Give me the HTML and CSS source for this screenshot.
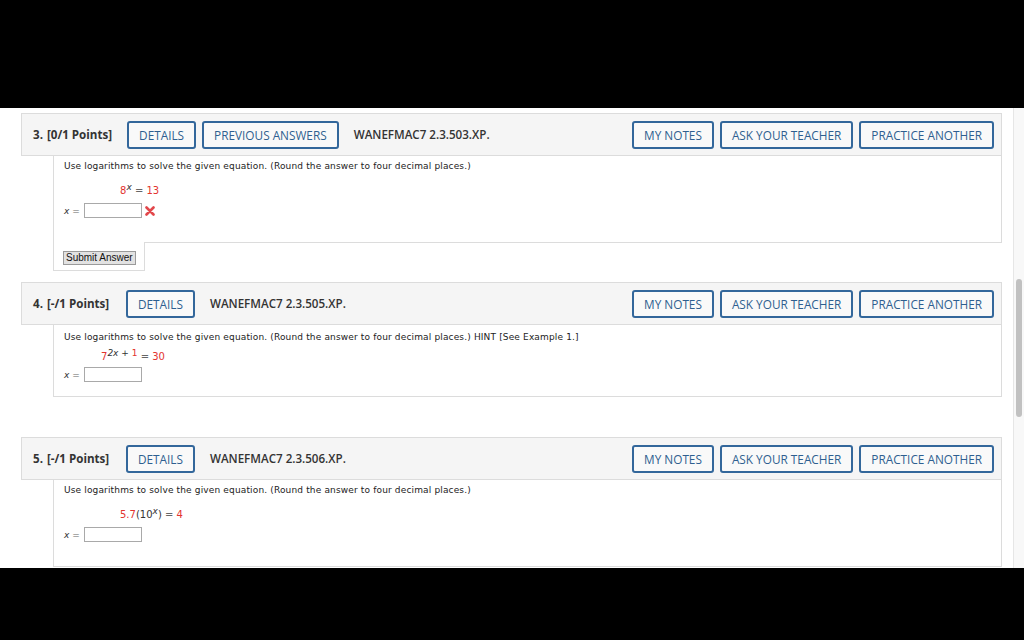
FILE: index.html
```html
<!DOCTYPE html>
<html lang="en">
<head>
    <meta charset="UTF-8">
    <title>Assignment</title>
    <link rel="stylesheet" href="styles.css">
</head>
<body>
    <div class="screen">
        <div class="viewport">
            <div class="content">
                <section class="question">
                    <div class="q-head">
                        <span class="q-num">3.</span>
                        <span class="q-points">[0/1 Points]</span>
                        <button class="q-btn q-btn-first">DETAILS</button>
                        <button class="q-btn">PREVIOUS ANSWERS</button>
                        <span class="q-code">WANEFMAC7 2.3.503.XP.</span>
                        <div class="q-actions">
                            <button class="q-btn">MY NOTES</button>
                            <button class="q-btn">ASK YOUR TEACHER</button>
                            <button class="q-btn">PRACTICE ANOTHER</button>
                        </div>
                    </div>
                    <div class="q-body">
                        <p class="prompt">Use logarithms to solve the given equation. (Round the answer to four decimal places.)</p>
                        <div class="equation eq-a">
                            <span class="red">8</span><sup class="var">x</sup> <span class="op">=</span> <span class="red">13</span>
                        </div>
                        <div class="answer">
                            <span class="var">x</span> <span class="op">=</span>
                            <span class="box"></span>
                            <svg class="wrong" width="10" height="10" viewBox="0 0 10 10">
                                <path d="M1.5 1.5 L8.5 8.5 M8.5 1.5 L1.5 8.5" stroke="#e2474b" stroke-width="2.6" stroke-linecap="round"/>
                            </svg>
                        </div>
                    </div>
                    <div class="q-foot">
                        <div class="submit-tab">
                            <button class="submit">Submit Answer</button>
                        </div>
                    </div>
                </section>

                <section class="question">
                    <div class="q-head">
                        <span class="q-num">4.</span>
                        <span class="q-points">[-/1 Points]</span>
                        <button class="q-btn q-btn-first">DETAILS</button>
                        <span class="q-code">WANEFMAC7 2.3.505.XP.</span>
                        <div class="q-actions">
                            <button class="q-btn">MY NOTES</button>
                            <button class="q-btn">ASK YOUR TEACHER</button>
                            <button class="q-btn">PRACTICE ANOTHER</button>
                        </div>
                    </div>
                    <div class="q-body q-body-tight">
                        <p class="prompt">Use logarithms to solve the given equation. (Round the answer to four decimal places.) HINT [See Example 1.]</p>
                        <div class="equation eq-b">
                            <span class="red">7</span><sup><span class="var-up">2x</span> + <span class="red">1</span></sup> <span class="op">=</span> <span class="red">30</span>
                        </div>
                        <div class="answer">
                            <span class="var">x</span> <span class="op">=</span>
                            <span class="box"></span>
                        </div>
                    </div>
                    <div class="q-foot"></div>
                </section>

                <section class="question">
                    <div class="q-head">
                        <span class="q-num">5.</span>
                        <span class="q-points">[-/1 Points]</span>
                        <button class="q-btn q-btn-first">DETAILS</button>
                        <span class="q-code">WANEFMAC7 2.3.506.XP.</span>
                        <div class="q-actions">
                            <button class="q-btn">MY NOTES</button>
                            <button class="q-btn">ASK YOUR TEACHER</button>
                            <button class="q-btn">PRACTICE ANOTHER</button>
                        </div>
                    </div>
                    <div class="q-body">
                        <p class="prompt">Use logarithms to solve the given equation. (Round the answer to four decimal places.)</p>
                        <div class="equation eq-a">
                            <span class="red">5.7</span>(10<sup class="var">x</sup>) <span class="op">=</span> <span class="red">4</span>
                        </div>
                        <div class="answer">
                            <span class="var">x</span> <span class="op">=</span>
                            <span class="box"></span>
                        </div>
                    </div>
                    <div class="q-foot"></div>
                </section>
            </div>
            <div class="scrollbar">
                <div class="thumb"></div>
            </div>
        </div>
    </div>
</body>
</html>
```

FILE: styles.css
```css
body {
    margin: 0;
    background: #000;
    font-family: 'Open Sans', sans-serif;
}
.screen {
    height: 640px;
    padding-top: 108px;
    box-sizing: border-box;
    overflow: hidden;
}
.viewport {
    display: flex;
    height: 460px;
    background: #fff;
    overflow: hidden;
}
.content {
    flex: 1;
    padding-top: 5px;
}
.scrollbar {
    width: 10px;
    background: #f8f8f8;
    border-left: 1px solid #e6e6e6;
    padding-top: 171px;
}
.thumb {
    width: 6px;
    height: 138px;
    margin-left: 2px;
    border-radius: 3px;
    background: #c1c1c1;
}
.question {
    margin: 0 11px 12px 21px;
}
.q-head {
    display: flex;
    align-items: center;
    height: 43px;
    box-sizing: border-box;
    padding: 0 7px 0 11px;
    background: #f5f5f5;
    border: 1px solid #dcdcdc;
    color: #333;
    font-size: 11.6px;
}
.q-num {
    font-weight: 700;
    margin-right: 4px;
}
.q-points {
    min-width: 64px;
    font-weight: 700;
    margin-right: 15px;
}
.q-btn {
    height: 28px;
    padding: 0 10px;
    margin-right: 6px;
    background: #f9f9f9;
    border: 2px solid #33679b;
    border-radius: 3px;
    color: #2e5f90;
    font-family: 'Open Sans', sans-serif;
    font-size: 11.8px;
}
.q-code {
    margin-left: 9px;
    font-weight: 600;
    color: #333;
}
.q-actions {
    display: flex;
    margin-left: auto;
}
.q-actions .q-btn:last-child {
    margin-right: 0;
}
.q-body {
    margin-left: 32px;
    padding: 4px 10px 24px;
    border: 1px solid #dcdcdc;
    border-top: none;
    font-family: 'DejaVu Sans', Verdana, sans-serif;
    color: #222;
}
.prompt {
    margin: 0;
    font-size: 9px;
    line-height: 13px;
    letter-spacing: 0.15px;
}
.equation {
    height: 14px;
    line-height: 14px;
    margin-top: 11px;
    font-size: 10px;
    color: #333;
}
.eq-a {
    padding-left: 56px;
}
.eq-b {
    padding-left: 37px;
}
.q-body-tight {
    padding-top: 6px;
    padding-bottom: 14px;
}
.q-body-tight .equation {
    margin-top: 6px;
}
.q-body-tight .answer {
    margin-top: 3px;
}
.red {
    color: #e3342f;
}
.op {
    color: #666;
}
sup {
    font-size: 9px;
    line-height: 0;
    vertical-align: 4px;
}
.var, .var-up {
    font-style: italic;
    color: #333;
}
.answer {
    display: flex;
    align-items: center;
    height: 15px;
    margin-top: 5px;
    font-size: 9px;
}
.answer .op {
    margin: 0 4px 0 3px;
}
.box {
    width: 56px;
    height: 13px;
    border: 1px solid #a9a9a9;
    background: #fff;
}
.wrong {
    margin-left: 3px;
}
.q-foot {
    height: 28px;
}
.submit-tab {
    display: flex;
    align-items: flex-start;
    width: 92px;
    height: 29px;
    margin: -1px 0 0 32px;
    background: #fff;
    border: 1px solid #dcdcdc;
    border-top: none;
    padding: 9px 0 0 9px;
    box-sizing: border-box;
}
.submit {
    height: 14px;
    padding: 0 2px;
    background: #e2e2e2;
    border: 1px solid #9a9a9a;
    border-radius: 0;
    font-family: 'Liberation Sans', Arial, sans-serif;
    font-size: 10px;
    line-height: 12px;
    color: #111;
}
```
